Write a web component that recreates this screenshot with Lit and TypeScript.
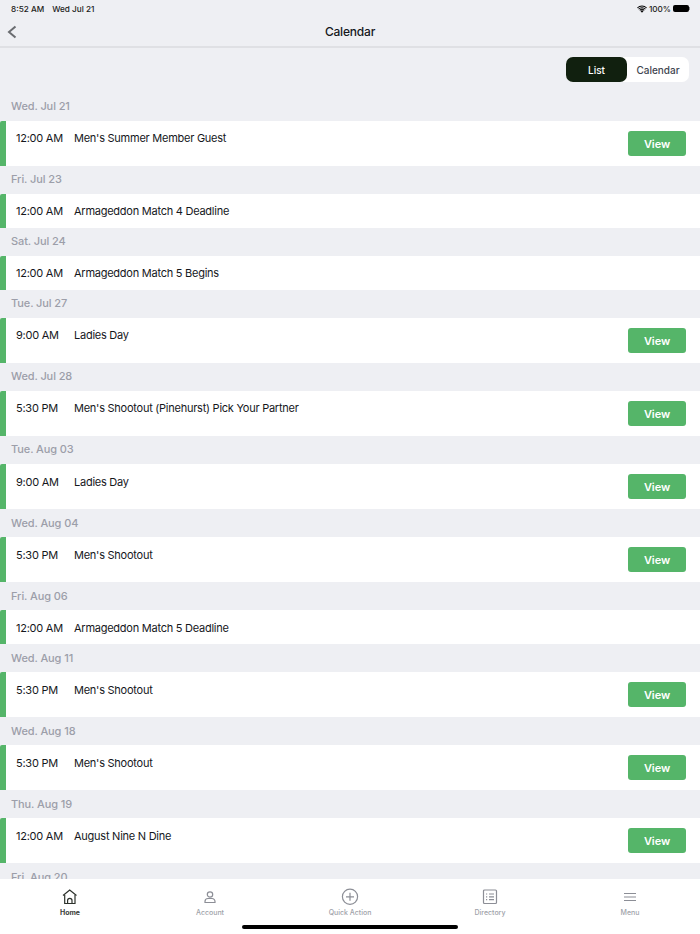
import { LitElement, html, css, svg } from 'lit';
import { customElement } from 'lit/decorators.js';

type CalEvent = { date: string; time: string; title: string; view: boolean };

const EVENTS: CalEvent[] = [
    { date: 'Wed. Jul 21', time: '12:00 AM', title: "Men's Summer Member Guest", view: true },
    { date: 'Fri. Jul 23', time: '12:00 AM', title: 'Armageddon Match 4 Deadline', view: false },
    { date: 'Sat. Jul 24', time: '12:00 AM', title: 'Armageddon Match 5 Begins', view: false },
    { date: 'Tue. Jul 27', time: '9:00 AM', title: 'Ladies Day', view: true },
    { date: 'Wed. Jul 28', time: '5:30 PM', title: "Men's Shootout (Pinehurst) Pick Your Partner", view: true },
    { date: 'Tue. Aug 03', time: '9:00 AM', title: 'Ladies Day', view: true },
    { date: 'Wed. Aug 04', time: '5:30 PM', title: "Men's Shootout", view: true },
    { date: 'Fri. Aug 06', time: '12:00 AM', title: 'Armageddon Match 5 Deadline', view: false },
    { date: 'Wed. Aug 11', time: '5:30 PM', title: "Men's Shootout", view: true },
    { date: 'Wed. Aug 18', time: '5:30 PM', title: "Men's Shootout", view: true },
    { date: 'Thu. Aug 19', time: '12:00 AM', title: 'August Nine N Dine', view: true },
    { date: 'Fri. Aug 20', time: '', title: '', view: false },
];

const TABS = [
    {
        label: 'Home',
        icon: svg`<path d="M2 7.5 8.7 2l6.8 5.5" /><path d="M3.700 7v8.500h10.300V7" /><path d="M6.600 15.500v-3a2.200 2.200 0 0 1 4.400 0v3" />`,
    },
    {
        label: 'Account',
        icon: svg`<circle cx="9" cy="6.500" r="2.700" /><path d="M4 14.500v-1a3 3 0 0 1 3-3h4a3 3 0 0 1 3 3v1z" />`,
    },
    {
        label: 'Quick Action',
        icon: svg`<circle cx="9" cy="8.800" r="7.600" /><path d="M9 4.800v8M5 8.800h8" />`,
    },
    {
        label: 'Directory',
        icon: svg`<rect x="2.500" y="2" width="13" height="13.500" rx="1" /><path d="M5 6h1.200M8 6h5M5 8.800h1.200M8 8.800h5M5 11.600h1.200M8 11.600h5" />`,
    },
    {
        label: 'Menu',
        icon: svg`<path d="M3 5.500h12M3 9h12M3 12.500h12" />`,
    },
];

@customElement('app-root')
export class AppRoot extends LitElement {
    static styles = css`
        :host {
            display: block;
            width: 700px;
            height: 934px;
            overflow: hidden;
            background: #eeeff3;
            font-family: Inter, 'Liberation Sans', sans-serif;
            color: #15171c;
        }
        .page {
            display: flex;
            flex-direction: column;
            height: 934px;
        }
        .status {
            height: 16px;
            box-sizing: border-box;
            padding: 1px 10px 0 11px;
            display: flex;
            align-items: center;
            justify-content: space-between;
            font-size: 8.2px;
            font-weight: 500;
            color: #1c1c20;
        }
        .status-left {
            display: flex;
            gap: 8px;
        }
        .status-right {
            display: flex;
            align-items: center;
            gap: 2px;
        }
        .battery {
            display: flex;
            align-items: center;
        }
        .battery-body {
            width: 16px;
            height: 7px;
            background: #000;
            border-radius: 2px;
        }
        .battery-tip {
            width: 1px;
            height: 3px;
            background: #8a8a8e;
        }
        .nav {
            height: 30px;
            display: flex;
            align-items: center;
            justify-content: center;
            position: relative;
            border-bottom: 2px solid #dfe0e4;
            font-size: 12px;
            font-weight: 500;
            letter-spacing: -0.2px;
        }
        .back {
            position: absolute;
            left: 7px;
            top: 9px;
        }
        .scroll {
            flex: 1;
            overflow: hidden;
        }
        .toggle-row {
            height: 34px;
            display: flex;
            justify-content: flex-end;
            align-items: flex-end;
            padding-right: 11px;
        }
        .toggle {
            display: flex;
            background: #fff;
            border-radius: 7px;
            height: 25px;
            font-size: 10px;
            font-weight: 500;
        }
        .toggle span {
            display: flex;
            align-items: center;
            justify-content: center;
        }
        .toggle .on {
            width: 61px;
            background: #11200f;
            color: #fff;
            border-radius: 7px;
        }
        .toggle .off {
            width: 62px;
            color: #41454f;
        }
        .date {
            height: 28.04px;
            box-sizing: border-box;
            padding: 6.36px 11px 0;
            font-size: 11px;
            font-weight: 500;
            letter-spacing: -0.1px;
            color: #9c9ea9;
            line-height: 14px;
        }
        .date.first {
            height: 39px;
            padding-top: 17px;
        }
        .row {
            display: flex;
            background: #fff;
            border-left: 6px solid #55b569;
            border-top-left-radius: 2px;
            padding: 10.36px 14px 0 10px;
            font-size: 11px;
            letter-spacing: -0.25px;
            line-height: 14px;
            box-sizing: border-box;
            height: 34px;
        }
        .row.tall {
            height: 45px;
        }
        .time {
            width: 58px;
        }
        .title {
            flex: 1;
        }
        .view {
            width: 58px;
            height: 25px;
            margin-top: -0.36px;
            background: #55b569;
            color: #fff;
            border-radius: 3px;
            display: flex;
            align-items: center;
            justify-content: center;
            font-size: 11px;
            font-weight: 600;
            letter-spacing: -0.1px;
        }
        .tabs {
            height: 55px;
            flex: none;
            background: #fff;
            display: grid;
            grid-template-columns: repeat(5, 140px);
            position: relative;
        }
        .tab {
            display: flex;
            flex-direction: column;
            align-items: center;
            padding-top: 9px;
            font-size: 7px;
            font-weight: 500;
            color: #a0a2a9;
        }
        .tab.active {
            color: #3b4039;
            font-weight: 700;
        }
        .tab svg {
            width: 18px;
            height: 18px;
            fill: none;
            stroke: #8c8e96;
            stroke-width: 1.2;
            margin-bottom: 2px;
        }
        .tab.active svg {
            stroke: #2d322c;
        }
        .indicator {
            position: absolute;
            left: 242px;
            bottom: 5px;
            width: 216px;
            height: 4px;
            border-radius: 2px;
            background: #000;
        }
    `;

    render() {
        return html`
            <div class="page">
                <div class="status">
                    <div class="status-left"><span>8:52 AM</span><span>Wed Jul 21</span></div>
                    <div class="status-right">
                        <svg width="10" height="8" viewBox="0 0 12 9" fill="#000">
                            <path d="M6 9 4.200 7a2.500 2.500 0 0 1 3.600 0zM2.900 5.700a4.400 4.400 0 0 1 6.200 0l-.8.800a3.300 3.300 0 0 0-4.600 0zM1.500 4.300a6.400 6.400 0 0 1 9 0l-.7.800a5.400 5.400 0 0 0-7.600 0zM0 2.900a8.500 8.500 0 0 1 12 0l-.7.800a7.500 7.500 0 0 0-10.600 0z" />
                        </svg>
                        <span>100%</span>
                        <div class="battery"><div class="battery-body"></div><div class="battery-tip"></div></div>
                    </div>
                </div>
                <div class="nav">
                    <svg class="back" width="10" height="14" viewBox="0 0 10 14" fill="none" stroke="#6a6c70" stroke-width="2">
                        <path d="M8.500 1.500 2 7l6.500 5.500" />
                    </svg>
                    Calendar
                </div>
                <div class="scroll">
                    <div class="toggle-row">
                        <div class="toggle"><span class="on">List</span><span class="off">Calendar</span></div>
                    </div>
                    ${EVENTS.map((e, i) => html`
                        <div class="date ${i === 0 ? 'first' : ''}">${e.date}</div>
                        ${e.time ? html`
                            <div class="row ${e.view ? 'tall' : ''}">
                                <span class="time">${e.time}</span>
                                <span class="title">${e.title}</span>
                                ${e.view ? html`<span class="view">View</span>` : null}
                            </div>` : null}
                    `)}
                </div>
                <div class="tabs">
                    ${TABS.map((t, i) => html`
                        <div class="tab ${i === 0 ? 'active' : ''}">
                            <svg viewBox="0 0 18 18">${t.icon}</svg>
                            <span>${t.label}</span>
                        </div>
                    `)}
                    <div class="indicator"></div>
                </div>
            </div>
        `;
    }
}
